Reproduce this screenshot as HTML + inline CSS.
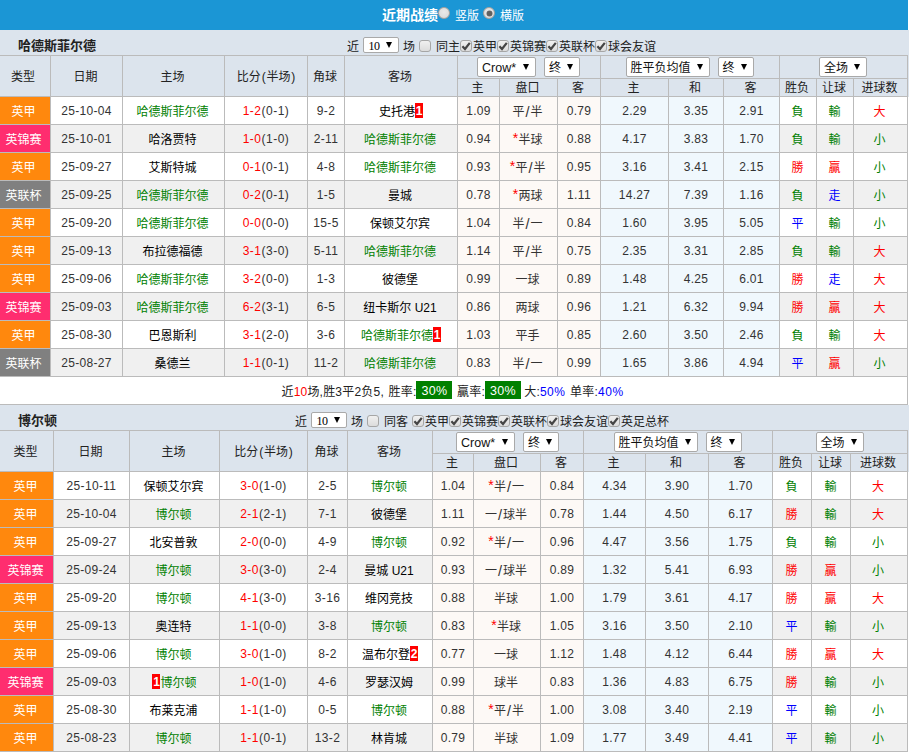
<!DOCTYPE html>
<html lang="zh-CN"><head><meta charset="utf-8"><title>近期战绩</title>
<style>
*{box-sizing:border-box}
html,body{margin:0;padding:0}
body{width:909px;height:752px;overflow:hidden;background:#fff;font-family:"Liberation Sans","Noto Sans CJK SC",sans-serif;font-size:12px;color:#333;position:relative}
.top{position:absolute;left:0;top:0;width:908px;height:30px;background:#1b96d5;color:#fff}
.top .tt{position:absolute;left:382px;top:5px;font-size:14px;font-weight:bold;line-height:20px;letter-spacing:0px}
.top .lb{position:absolute;top:7px;font-size:12px;line-height:18px}
.radio{position:absolute;width:12px;height:12px;border-radius:50%;background:radial-gradient(circle at 50% 40%,#e9e9e9 0,#dedede 60%,#cdcdcd 100%);border:1px solid #a9a39d}
.radio.on::after{content:"";position:absolute;left:2.5px;top:2.5px;width:5px;height:5px;border-radius:50%;background:#606060;box-shadow:0 0 0 .5px #707070}
.bar{position:absolute;left:0;width:909px;background:#dce4ed}
.bar .nm{position:absolute;left:18px;font-size:13px;font-weight:bold;color:#222;line-height:18px}
.filt{position:absolute;top:8px;white-space:nowrap;font-size:12px;line-height:18px;color:#222}
.sel{display:inline-block;position:relative;height:20px;background:#fff;border:1px solid #a9a9a9;border-radius:2px;vertical-align:middle;text-align:left;font-weight:normal;color:#111;line-height:17px;white-space:nowrap;overflow:hidden;letter-spacing:0}
.sel .st{position:absolute;left:4px;top:2px;font-size:12px}
.sel .ar{position:absolute;right:6px;top:6px;width:0;height:0;border-left:3.5px solid transparent;border-right:3.5px solid transparent;border-top:6px solid #000;font-size:0}
.sel.la .st{font-size:12.5px}
.sel.n10{height:16px;line-height:14px;top:-3px}
.sel.n10 .st{font-family:"Liberation Serif",serif;font-size:12px;left:4.5px;top:1.5px;color:#000;letter-spacing:-.6px}
.sel.n10 .ar{top:4px;right:6px}
.sp{display:inline-block;width:4px;white-space:pre}
.cb{display:inline-block;width:12px;height:12px;border:1px solid #a6a6a6;border-radius:3px;background:linear-gradient(#f0f0f0,#dcdcdc);vertical-align:middle;position:relative;margin:0 1px 0 0;top:-2px}
.cb svg{position:absolute;left:-1px;top:-1px}
table{position:absolute;left:-1px;border-collapse:collapse;table-layout:fixed;width:909px}
td,th{border:1px solid #bbb;padding:0;text-align:center;font-weight:normal;white-space:nowrap;overflow:hidden}
th{background:#dce4ed;color:#222}
td{height:28px;line-height:18px;letter-spacing:.33px}
td.c{letter-spacing:0;padding-top:3px;padding-right:2px}
th{padding-right:2px}
td.t1,td.t2,td.t3{padding-right:3px}
th.ty{padding-right:4px}
.tb2 td.t1,.tb2 td.t2,.tb2 td.t3,.tb2 th.ty{padding-right:2px}
td.tm{color:#000}
td.sc2{letter-spacing:.5px}
td.nb{padding-right:0}
th[rowspan]{padding-bottom:2px}
tr.h2 th{line-height:15px;padding-top:2px}
tr.alt td{background:#f0f0f0}
td.o1,tr.alt td.o1{background:#fdf9f6}
td.o2,tr.alt td.o2{background:#f0f8fd}
td.t1,tr.alt td.t1{background:#ff880d;color:#fff}
td.t2,tr.alt td.t2{background:#ff2d6f;color:#fff}
td.t3,tr.alt td.t3{background:#808080;color:#fff}
.ls{letter-spacing:.5px}
.pn{display:inline-block;width:5.7px;text-align:center}
.g{color:#008000} .r{color:#ff0000} .b{color:#0000ff}
.sl{display:inline-block;width:6px;text-align:center;font-size:14.5px;line-height:12px;position:relative;top:.5px}
.as{display:inline-block;width:6px;text-align:center;font-size:14px;line-height:12px;position:relative;top:-1.5px}
td.g{color:#008000;padding-right:1px} td.r{color:#f00;padding-right:1px} td.b{color:#00f;padding-right:1px}
td.c:last-child{padding-right:2px}
.rc{background:#f00;color:#fff;font-weight:bold;display:inline-block;width:8px;height:15px;line-height:17px;overflow:hidden;text-align:center;font-size:12px;vertical-align:middle;position:relative;top:-2px;letter-spacing:0}
th.sc{padding:0 1px 0 0}
th.sc .sel{margin:0 4px}
td.sum{color:#222;letter-spacing:.2px;word-spacing:1.1px;padding-top:3px;padding-right:2px}
.pc{background:#008000;color:#fff;display:inline-block;width:36px;text-align:center;font-size:12.5px;line-height:20px;height:18px;overflow:hidden;margin:0;letter-spacing:.3px;vertical-align:middle;position:relative;top:-2px}
</style></head><body>
<div class="top"><span class="tt">近期战绩</span><span class="radio" style="left:438px;top:7px"></span><span class="lb" style="left:455px">竖版</span><span class="radio on" style="left:483px;top:7px"></span><span class="lb" style="left:500px">横版</span></div>
<div class="bar" style="top:30px;height:67px"><span class="nm" style="top:7px">哈德斯菲尔德</span><div class="filt" style="left:347px">近<span class="sp"> </span><span class="sel n10" style="width:36px"><span class="st">10</span><span class="ar"></span></span><span class="sp"> </span>场<span class="sp"> </span><span class="cb"></span><span class="sp"> </span>同主<span class="cb on"><svg viewBox="0 0 12 12" width="12" height="12"><path d="M2.4 6.2 L5 9 L9.8 2.8" fill="none" stroke="#454545" stroke-width="2.2"/></svg></span><span class="fl">英甲</span><span class="cb on"><svg viewBox="0 0 12 12" width="12" height="12"><path d="M2.4 6.2 L5 9 L9.8 2.8" fill="none" stroke="#454545" stroke-width="2.2"/></svg></span><span class="fl">英锦赛</span><span class="cb on"><svg viewBox="0 0 12 12" width="12" height="12"><path d="M2.4 6.2 L5 9 L9.8 2.8" fill="none" stroke="#454545" stroke-width="2.2"/></svg></span><span class="fl">英联杯</span><span class="cb on"><svg viewBox="0 0 12 12" width="12" height="12"><path d="M2.4 6.2 L5 9 L9.8 2.8" fill="none" stroke="#454545" stroke-width="2.2"/></svg></span><span class="fl">球会友谊</span></div></div>
<table style="top:55px"><colgroup><col style="width:51px"><col style="width:72px"><col style="width:102px"><col style="width:83px"><col style="width:37px"><col style="width:113px"><col style="width:42px"><col style="width:58px"><col style="width:43px"><col style="width:68px"><col style="width:55px"><col style="width:56px"><col style="width:37px"><col style="width:37px"><col style="width:54px"></colgroup>
<tr class="h1" style="height:23px"><th rowspan="2" class="ty">类型</th><th rowspan="2">日期</th><th rowspan="2">主场</th><th rowspan="2" style="padding-right:0;padding-left:1px">比分<span class="pn">(</span>半场<span class="pn">)</span></th><th rowspan="2">角球</th><th rowspan="2">客场</th>
<th colspan="3" class="sc"><span class="sel la" style="width:59px"><span class="st">Crow*</span><span class="ar"></span></span><span class="sel s2" style="width:36px"><span class="st">终</span><span class="ar"></span></span></th>
<th colspan="3" class="sc"><span class="sel " style="width:84px"><span class="st">胜平负均值</span><span class="ar"></span></span><span class="sel s2" style="width:36px"><span class="st">终</span><span class="ar"></span></span></th>
<th colspan="3" class="sc"><span class="sel " style="width:48px"><span class="st">全场</span><span class="ar"></span></span></th></tr>
<tr class="h2" style="height:18px"><th>主</th><th>盘口</th><th>客</th><th>主</th><th>和</th><th>客</th><th>胜负</th><th>让球</th><th>进球数</th></tr>
<tr><td class="c t1">英甲</td><td>25-10-04</td><td class="c tm"><span class="g">哈德斯菲尔德</span></td><td class="sc2"><span class="r">1-2</span>(0-1)</td><td>9-2</td><td class="c tm nb"><span>史托港</span><span class="rc">1</span></td><td class="o1">1.09</td><td class="c o1">平<span class="sl">/</span>半</td><td class="o1">0.79</td><td class="o2">2.29</td><td class="o2">3.35</td><td class="o2">2.91</td><td class="c g">負</td><td class="c g">輸</td><td class="c r">大</td></tr>
<tr class="alt"><td class="c t2">英锦赛</td><td>25-10-01</td><td class="c tm"><span>哈洛贾特</span></td><td class="sc2"><span class="r">1-0</span>(1-0)</td><td>2-11</td><td class="c tm"><span class="g">哈德斯菲尔德</span></td><td class="o1">0.94</td><td class="c o1"><span class="r as">*</span>半球</td><td class="o1">0.88</td><td class="o2">4.17</td><td class="o2">3.83</td><td class="o2">1.70</td><td class="c g">負</td><td class="c g">輸</td><td class="c g">小</td></tr>
<tr><td class="c t1">英甲</td><td>25-09-27</td><td class="c tm"><span>艾斯特城</span></td><td class="sc2"><span class="r">0-1</span>(0-1)</td><td>4-8</td><td class="c tm"><span class="g">哈德斯菲尔德</span></td><td class="o1">0.93</td><td class="c o1"><span class="r as">*</span>平<span class="sl">/</span>半</td><td class="o1">0.95</td><td class="o2">3.16</td><td class="o2">3.41</td><td class="o2">2.15</td><td class="c r">勝</td><td class="c r">贏</td><td class="c g">小</td></tr>
<tr class="alt"><td class="c t3">英联杯</td><td>25-09-25</td><td class="c tm"><span class="g">哈德斯菲尔德</span></td><td class="sc2"><span class="r">0-2</span>(0-1)</td><td>1-5</td><td class="c tm"><span>曼城</span></td><td class="o1">0.78</td><td class="c o1"><span class="r as">*</span>两球</td><td class="o1">1.11</td><td class="o2">14.27</td><td class="o2">7.39</td><td class="o2">1.16</td><td class="c g">負</td><td class="c b">走</td><td class="c g">小</td></tr>
<tr><td class="c t1">英甲</td><td>25-09-20</td><td class="c tm"><span class="g">哈德斯菲尔德</span></td><td class="sc2"><span class="r">0-0</span>(0-0)</td><td>15-5</td><td class="c tm"><span>保顿艾尔宾</span></td><td class="o1">1.04</td><td class="c o1">半<span class="sl">/</span>一</td><td class="o1">0.84</td><td class="o2">1.60</td><td class="o2">3.95</td><td class="o2">5.05</td><td class="c b">平</td><td class="c g">輸</td><td class="c g">小</td></tr>
<tr class="alt"><td class="c t1">英甲</td><td>25-09-13</td><td class="c tm"><span>布拉德福德</span></td><td class="sc2"><span class="r">3-1</span>(3-0)</td><td>5-11</td><td class="c tm"><span class="g">哈德斯菲尔德</span></td><td class="o1">1.14</td><td class="c o1">平<span class="sl">/</span>半</td><td class="o1">0.75</td><td class="o2">2.35</td><td class="o2">3.31</td><td class="o2">2.85</td><td class="c g">負</td><td class="c g">輸</td><td class="c r">大</td></tr>
<tr><td class="c t1">英甲</td><td>25-09-06</td><td class="c tm"><span class="g">哈德斯菲尔德</span></td><td class="sc2"><span class="r">3-2</span>(0-0)</td><td>1-3</td><td class="c tm"><span>彼德堡</span></td><td class="o1">0.99</td><td class="c o1">一球</td><td class="o1">0.89</td><td class="o2">1.48</td><td class="o2">4.25</td><td class="o2">6.01</td><td class="c r">勝</td><td class="c b">走</td><td class="c r">大</td></tr>
<tr class="alt"><td class="c t2">英锦赛</td><td>25-09-03</td><td class="c tm"><span class="g">哈德斯菲尔德</span></td><td class="sc2"><span class="r">6-2</span>(3-1)</td><td>6-5</td><td class="c tm"><span>纽卡斯尔 U21</span></td><td class="o1">0.86</td><td class="c o1">两球</td><td class="o1">0.96</td><td class="o2">1.21</td><td class="o2">6.32</td><td class="o2">9.94</td><td class="c r">勝</td><td class="c r">贏</td><td class="c r">大</td></tr>
<tr><td class="c t1">英甲</td><td>25-08-30</td><td class="c tm"><span>巴恩斯利</span></td><td class="sc2"><span class="r">3-1</span>(2-0)</td><td>3-6</td><td class="c tm nb"><span class="g">哈德斯菲尔德</span><span class="rc">1</span></td><td class="o1">1.03</td><td class="c o1">平手</td><td class="o1">0.85</td><td class="o2">2.60</td><td class="o2">3.50</td><td class="o2">2.46</td><td class="c g">負</td><td class="c g">輸</td><td class="c r">大</td></tr>
<tr class="alt"><td class="c t3">英联杯</td><td>25-08-27</td><td class="c tm"><span>桑德兰</span></td><td class="sc2"><span class="r">1-1</span>(0-1)</td><td>11-2</td><td class="c tm"><span class="g">哈德斯菲尔德</span></td><td class="o1">0.83</td><td class="c o1">半<span class="sl">/</span>一</td><td class="o1">0.99</td><td class="o2">1.65</td><td class="o2">3.86</td><td class="o2">4.94</td><td class="c b">平</td><td class="c r">贏</td><td class="c g">小</td></tr>
<tr><td colspan="15" class="sum">近<span class="r">10</span>场,胜3平2负5, 胜率:<span class="pc">30%</span> 贏率:<span class="pc">30%</span> <span style="margin-left:-1.5px">大:</span><span class="b ls">50%</span> 单率:<span class="b ls">40%</span></td></tr>
</table>
<div class="bar" style="top:405px;height:67px"><span class="nm" style="top:7px">博尔顿</span><div class="filt" style="left:295px">近<span class="sp"> </span><span class="sel n10" style="width:36px"><span class="st">10</span><span class="ar"></span></span><span class="sp"> </span>场<span class="sp"> </span><span class="cb"></span><span class="sp"> </span>同客<span class="sp"> </span><span class="cb on"><svg viewBox="0 0 12 12" width="12" height="12"><path d="M2.4 6.2 L5 9 L9.8 2.8" fill="none" stroke="#454545" stroke-width="2.2"/></svg></span><span class="fl">英甲</span><span class="cb on"><svg viewBox="0 0 12 12" width="12" height="12"><path d="M2.4 6.2 L5 9 L9.8 2.8" fill="none" stroke="#454545" stroke-width="2.2"/></svg></span><span class="fl">英锦赛</span><span class="cb on"><svg viewBox="0 0 12 12" width="12" height="12"><path d="M2.4 6.2 L5 9 L9.8 2.8" fill="none" stroke="#454545" stroke-width="2.2"/></svg></span><span class="fl">英联杯</span><span class="cb on"><svg viewBox="0 0 12 12" width="12" height="12"><path d="M2.4 6.2 L5 9 L9.8 2.8" fill="none" stroke="#454545" stroke-width="2.2"/></svg></span><span class="fl">球会友谊</span><span class="cb on"><svg viewBox="0 0 12 12" width="12" height="12"><path d="M2.4 6.2 L5 9 L9.8 2.8" fill="none" stroke="#454545" stroke-width="2.2"/></svg></span><span class="fl">英足总杯</span></div></div>
<table class="tb2" style="top:430px"><colgroup><col style="width:54px"><col style="width:76px"><col style="width:90px"><col style="width:88px"><col style="width:40px"><col style="width:85px"><col style="width:41px"><col style="width:67px"><col style="width:43px"><col style="width:62px"><col style="width:63px"><col style="width:64px"><col style="width:39px"><col style="width:39px"><col style="width:57px"></colgroup>
<tr class="h1" style="height:23px"><th rowspan="2" class="ty">类型</th><th rowspan="2">日期</th><th rowspan="2">主场</th><th rowspan="2" style="padding-right:0;padding-left:1px">比分<span class="pn">(</span>半场<span class="pn">)</span></th><th rowspan="2">角球</th><th rowspan="2">客场</th>
<th colspan="3" class="sc"><span class="sel la" style="width:59px"><span class="st">Crow*</span><span class="ar"></span></span><span class="sel s2" style="width:36px"><span class="st">终</span><span class="ar"></span></span></th>
<th colspan="3" class="sc"><span class="sel " style="width:84px"><span class="st">胜平负均值</span><span class="ar"></span></span><span class="sel s2" style="width:36px"><span class="st">终</span><span class="ar"></span></span></th>
<th colspan="3" class="sc"><span class="sel " style="width:48px"><span class="st">全场</span><span class="ar"></span></span></th></tr>
<tr class="h2" style="height:18px"><th>主</th><th>盘口</th><th>客</th><th>主</th><th>和</th><th>客</th><th>胜负</th><th>让球</th><th>进球数</th></tr>
<tr><td class="c t1">英甲</td><td>25-10-11</td><td class="c tm"><span>保顿艾尔宾</span></td><td class="sc2"><span class="r">3-0</span>(1-0)</td><td>2-5</td><td class="c tm"><span class="g">博尔顿</span></td><td class="o1">1.04</td><td class="c o1"><span class="r as">*</span>半<span class="sl">/</span>一</td><td class="o1">0.84</td><td class="o2">4.34</td><td class="o2">3.90</td><td class="o2">1.70</td><td class="c g">負</td><td class="c g">輸</td><td class="c r">大</td></tr>
<tr class="alt"><td class="c t1">英甲</td><td>25-10-04</td><td class="c tm"><span class="g">博尔顿</span></td><td class="sc2"><span class="r">2-1</span>(2-1)</td><td>7-1</td><td class="c tm"><span>彼德堡</span></td><td class="o1">1.11</td><td class="c o1">一<span class="sl">/</span>球半</td><td class="o1">0.78</td><td class="o2">1.44</td><td class="o2">4.50</td><td class="o2">6.17</td><td class="c r">勝</td><td class="c g">輸</td><td class="c r">大</td></tr>
<tr><td class="c t1">英甲</td><td>25-09-27</td><td class="c tm"><span>北安普敦</span></td><td class="sc2"><span class="r">2-0</span>(0-0)</td><td>4-9</td><td class="c tm"><span class="g">博尔顿</span></td><td class="o1">0.92</td><td class="c o1"><span class="r as">*</span>半<span class="sl">/</span>一</td><td class="o1">0.96</td><td class="o2">4.47</td><td class="o2">3.56</td><td class="o2">1.75</td><td class="c g">負</td><td class="c g">輸</td><td class="c g">小</td></tr>
<tr class="alt"><td class="c t2">英锦赛</td><td>25-09-24</td><td class="c tm"><span class="g">博尔顿</span></td><td class="sc2"><span class="r">3-0</span>(3-0)</td><td>2-4</td><td class="c tm"><span>曼城 U21</span></td><td class="o1">0.93</td><td class="c o1">一<span class="sl">/</span>球半</td><td class="o1">0.89</td><td class="o2">1.32</td><td class="o2">5.41</td><td class="o2">6.93</td><td class="c r">勝</td><td class="c r">贏</td><td class="c g">小</td></tr>
<tr><td class="c t1">英甲</td><td>25-09-20</td><td class="c tm"><span class="g">博尔顿</span></td><td class="sc2"><span class="r">4-1</span>(3-0)</td><td>3-16</td><td class="c tm"><span>维冈竞技</span></td><td class="o1">0.88</td><td class="c o1">半球</td><td class="o1">1.00</td><td class="o2">1.79</td><td class="o2">3.61</td><td class="o2">4.17</td><td class="c r">勝</td><td class="c r">贏</td><td class="c r">大</td></tr>
<tr class="alt"><td class="c t1">英甲</td><td>25-09-13</td><td class="c tm"><span>奥连特</span></td><td class="sc2"><span class="r">1-1</span>(0-0)</td><td>3-8</td><td class="c tm"><span class="g">博尔顿</span></td><td class="o1">0.83</td><td class="c o1"><span class="r as">*</span>半球</td><td class="o1">1.05</td><td class="o2">3.16</td><td class="o2">3.50</td><td class="o2">2.10</td><td class="c b">平</td><td class="c g">輸</td><td class="c g">小</td></tr>
<tr><td class="c t1">英甲</td><td>25-09-06</td><td class="c tm"><span class="g">博尔顿</span></td><td class="sc2"><span class="r">3-0</span>(1-0)</td><td>8-2</td><td class="c tm nb"><span>温布尔登</span><span class="rc">2</span></td><td class="o1">0.77</td><td class="c o1">一球</td><td class="o1">1.12</td><td class="o2">1.48</td><td class="o2">4.12</td><td class="o2">6.44</td><td class="c r">勝</td><td class="c r">贏</td><td class="c r">大</td></tr>
<tr class="alt"><td class="c t2">英锦赛</td><td>25-09-03</td><td class="c tm nb"><span class="rc">1</span><span class="g">博尔顿</span></td><td class="sc2"><span class="r">1-0</span>(1-0)</td><td>4-6</td><td class="c tm"><span>罗瑟汉姆</span></td><td class="o1">0.99</td><td class="c o1">球半</td><td class="o1">0.83</td><td class="o2">1.36</td><td class="o2">4.83</td><td class="o2">6.75</td><td class="c r">勝</td><td class="c g">輸</td><td class="c g">小</td></tr>
<tr><td class="c t1">英甲</td><td>25-08-30</td><td class="c tm"><span>布莱克浦</span></td><td class="sc2"><span class="r">1-1</span>(1-0)</td><td>0-5</td><td class="c tm"><span class="g">博尔顿</span></td><td class="o1">0.88</td><td class="c o1"><span class="r as">*</span>平<span class="sl">/</span>半</td><td class="o1">1.00</td><td class="o2">3.08</td><td class="o2">3.40</td><td class="o2">2.19</td><td class="c b">平</td><td class="c g">輸</td><td class="c g">小</td></tr>
<tr class="alt"><td class="c t1">英甲</td><td>25-08-23</td><td class="c tm"><span class="g">博尔顿</span></td><td class="sc2"><span class="r">1-1</span>(0-1)</td><td>13-2</td><td class="c tm"><span>林肯城</span></td><td class="o1">0.79</td><td class="c o1">半球</td><td class="o1">1.09</td><td class="o2">1.77</td><td class="o2">3.49</td><td class="o2">4.41</td><td class="c b">平</td><td class="c g">輸</td><td class="c g">小</td></tr>
</table>
</body></html>
